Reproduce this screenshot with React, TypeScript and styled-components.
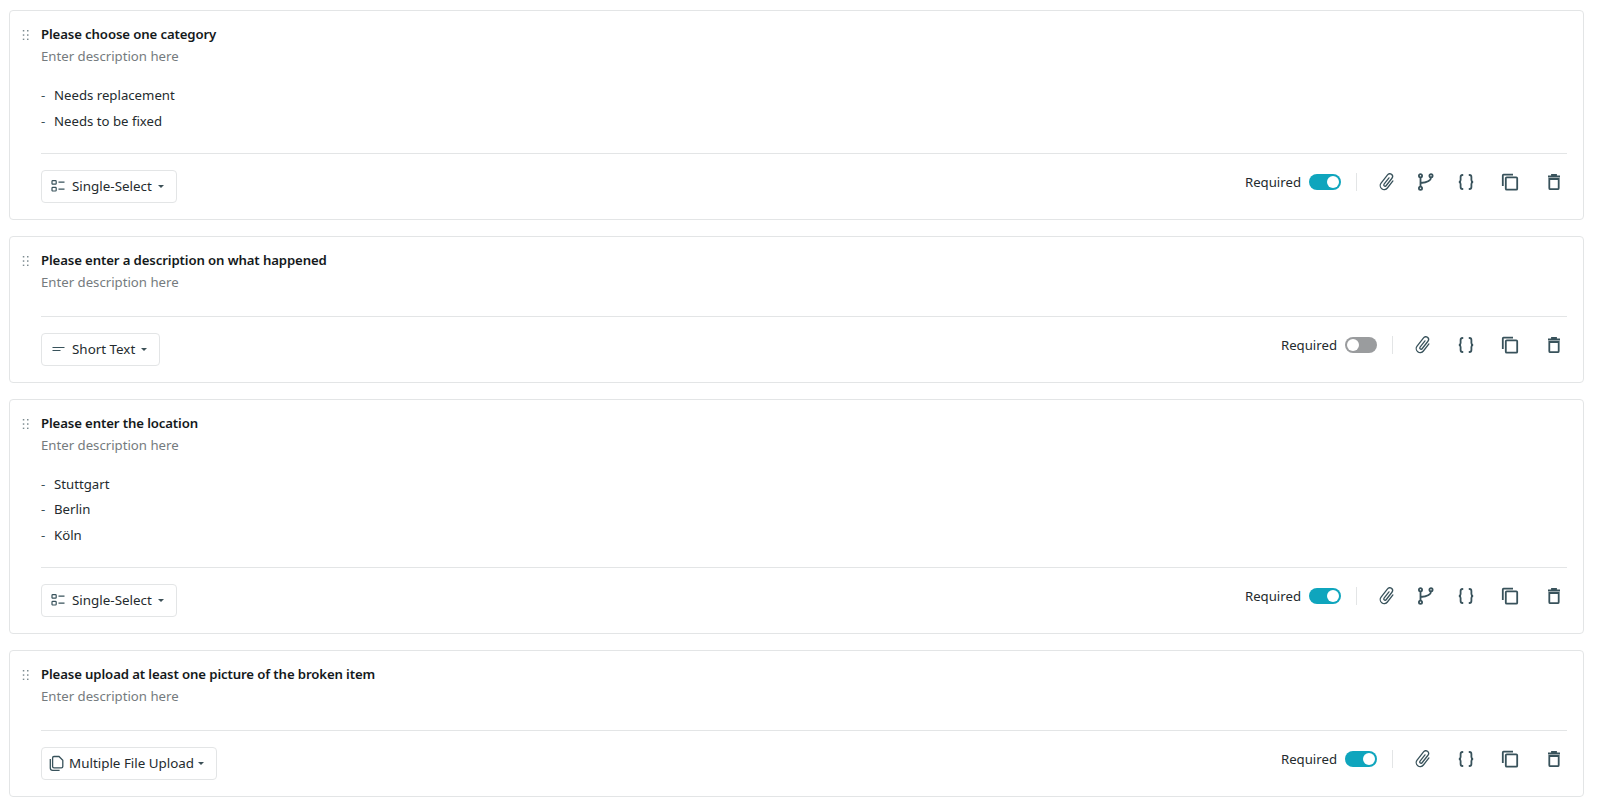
import React from 'react'
import styled, { createGlobalStyle } from 'styled-components'

const GlobalStyle = createGlobalStyle`
  html, body {
    margin: 0;
    padding: 0;
    background: #fff;
    font-family: 'Noto Sans', 'Liberation Sans', sans-serif;
  }
`

const Page = styled.div`
  display: flex;
  flex-direction: column;
  gap: 16px;
  padding: 10px 16px 0 9px;
`

const Card = styled.section`
  display: flex;
  gap: 6px;
  padding: 13px 16px 16px 12px;
  border: 1px solid #e3e5e6;
  border-radius: 4px;
  background: #fff;
`

const Handle = styled.svg`
  flex: none;
  width: 7px;
  height: 11px;
  margin-top: 5px;
  color: #7d8b90;
`

const Body = styled.div`
  flex: 1;
  min-width: 0;
  margin-left: 6px;
`

const Title = styled.h3`
  margin: 0;
  font-size: 13.2px;
  letter-spacing: -0.12px;
  line-height: 20px;
  font-weight: 600;
  color: #14191b;
`

const Description = styled.p`
  margin: 2px 0 0;
  font-size: 13.2px;
  line-height: 20px;
  color: #757b7e;
`

const Options = styled.ul`
  list-style: none;
  margin: 19px 0 0;
  padding: 0;
`

const Option = styled.li`
  display: flex;
  font-size: 13.2px;
  line-height: 20px;
  color: #242b2e;
  margin-bottom: 5.5px;

  &::before {
    content: '-';
    width: 13px;
    color: #3c5057;
  }
`

const Footer = styled.div<{ $gap: number }>`
  display: flex;
  justify-content: space-between;
  align-items: flex-start;
  margin-top: ${(p) => p.$gap}px;
  padding-top: 16px;
  border-top: 1px solid #e3e5e6;
`

const TypeButton = styled.button<{ $left: number; $gap: number }>`
  display: flex;
  align-items: center;
  height: 33px;
  padding: 0 12px 0 ${(p) => p.$left}px;
  gap: ${(p) => p.$gap}px;
  border: 1px solid #e3e5e6;
  border-radius: 4px;
  background: #fff;
  font: inherit;
  font-size: 13.4px;
  color: #242b2e;
`

const Caret = styled.span`
  width: 0;
  height: 0;
  border-left: 3px solid transparent;
  border-right: 3px solid transparent;
  border-top: 3px solid #3c5057;
`

const Actions = styled.div`
  display: flex;
  align-items: center;
  height: 24px;
`

const RequiredLabel = styled.span`
  font-size: 13.2px;
  color: #242b2e;
  margin-right: 8px;
`

const Toggle = styled.span<{ $on: boolean }>`
  display: flex;
  align-items: center;
  justify-content: ${(p) => (p.$on ? 'flex-end' : 'flex-start')};
  box-sizing: border-box;
  width: 32px;
  height: 16px;
  padding: 0 2px;
  border-radius: 8px;
  background: ${(p) => (p.$on ? '#0fa5bd' : '#9a9c9e')};

  &::after {
    content: '';
    width: 12px;
    height: 12px;
    border-radius: 50%;
    background: #fff;
  }
`

const Separator = styled.span`
  width: 1px;
  height: 18px;
  margin: 0 20px 0 15px;
  background: #e3e5e6;
`

const IconRow = styled.div`
  display: flex;
  align-items: center;
  margin-right: 3px;
`

const IconButton = styled.span<{ $offset?: number }>`
  display: flex;
  width: 20px;
  margin-left: ${(p) => p.$offset ?? 0}px;
  color: #38525b;

  svg {
    display: block;
  }
`

const ClipIcon = () => (
  <svg width="20" height="20" viewBox="0 0 20 20" fill="none" stroke="currentColor" strokeWidth="1.3" strokeLinecap="round">
    <g transform="rotate(38 10 10)">
      <path d="M14 5.500v9a4 4 0 0 1-8 0V4a2.800 2.800 0 0 1 5.600 0v9.500a1.300 1.300 0 0 1-2.600 0V5.500" />
    </g>
  </svg>
)

const BranchIcon = () => (
  <svg width="20" height="20" viewBox="0 0 20 20" fill="none" stroke="currentColor" strokeWidth="1.8">
    <circle cx="4.500" cy="3.800" r="1.600" />
    <circle cx="4.500" cy="16.200" r="1.600" />
    <circle cx="15" cy="3.800" r="1.600" />
    <path d="M4.500 5.400v9.200M15 5.400c0 3.600-5 5-10.500 5.600" />
  </svg>
)

const BracesIcon = () => (
  <svg width="20" height="20" viewBox="0 0 20 20" fill="none" stroke="currentColor" strokeWidth="1.800" strokeLinecap="round">
    <path d="M6.500 3C5 3 4.600 3.800 4.600 5v3c0 1-.5 1.800-1.600 2 1.100.2 1.600 1 1.600 2v3c0 1.200.4 2 1.900 2" />
    <path d="M13.500 3c1.500 0 1.900.8 1.900 2v3c0 1 .5 1.800 1.600 2-1.100.2-1.600 1-1.600 2v3c0 1.200-.4 2-1.900 2" />
  </svg>
)

const CopyIcon = () => (
  <svg width="20" height="20" viewBox="0 0 20 20" fill="none" stroke="currentColor" strokeWidth="1.800">
    <rect x="5.800" y="5.300" width="11.400" height="12.400" rx="1" />
    <path d="M2.800 14V3.400c0-.4.300-.7.700-.7H13" />
  </svg>
)

const TrashIcon = () => (
  <svg width="20" height="20" viewBox="0 0 20 20" fill="none" stroke="currentColor" strokeWidth="1.800">
    <path d="M4 4.500h12M8 4.300V2.900h4v1.400" />
    <path d="M5.300 7h9.400v9.200c0 .6-.4 1-1 1H6.300c-.6 0-1-.4-1-1z" />
  </svg>
)

const SelectIcon = () => (
  <svg width="15" height="14" viewBox="0 0 15 14" fill="none" stroke="#38525b" strokeWidth="1.200">
    <rect x="1" y="1.600" width="4.200" height="3.600" rx=".8" />
    <rect x="1" y="8.400" width="4.200" height="3.600" rx=".8" />
    <path d="M7.500 3.200h6M7.500 10.200h6" />
  </svg>
)

const ShortTextIcon = () => (
  <svg width="15" height="14" viewBox="0 0 15 14" fill="none" stroke="#38525b" strokeWidth="1.200">
    <path d="M1.500 5.500h12M1.500 8.500h8" />
  </svg>
)

const FilesIcon = () => (
  <svg width="16" height="18" viewBox="0 0 16 18" fill="none" stroke="#38525b" strokeWidth="1.300">
    <path d="M5 2.500h5l3.800 3.800v6.200c0 .8-.6 1.400-1.400 1.400H5c-.8 0-1.400-.6-1.400-1.400V3.900c0-.8.600-1.400 1.400-1.400z" />
    <path d="M1.300 5v9c0 1.300 1 2.300 2.300 2.300h7" />
  </svg>
)

const DragDots = () => (
  <Handle viewBox="0 0 7 11" fill="currentColor">
    {[0.8, 5].map((x) => [1, 5.3, 9.6].map((y) => <rect key={`${x}-${y}`} x={x} y={y} width="1.500" height="1.500" />))}
  </Handle>
)

type Question = {
  title: string
  options: string[]
  type: string
  icon: React.ReactNode
  left: number
  iconGap: number
  required: boolean
  branch: boolean
}

const questions: Question[] = [
  { title: 'Please choose one category', options: ['Needs replacement', 'Needs to be fixed'], type: 'Single-Select', icon: <SelectIcon />, left: 9, iconGap: 6, required: true, branch: true },
  { title: 'Please enter a description on what happened', options: [], type: 'Short Text', icon: <ShortTextIcon />, left: 9, iconGap: 6, required: false, branch: false },
  { title: 'Please enter the location', options: ['Stuttgart', 'Berlin', 'Köln'], type: 'Single-Select', icon: <SelectIcon />, left: 9, iconGap: 6, required: true, branch: true },
  { title: 'Please upload at least one picture of the broken item', options: [], type: 'Multiple File Upload', icon: <FilesIcon />, left: 7, iconGap: 4, required: true, branch: false },
]

export default function App() {
  return (
    <>
      <GlobalStyle />
      <Page>
        {questions.map((q) => (
          <Card key={q.title}>
            <DragDots />
            <Body>
              <Title>{q.title}</Title>
              <Description>Enter description here</Description>
              {q.options.length > 0 && (
                <Options>
                  {q.options.map((o) => (
                    <Option key={o}>{o}</Option>
                  ))}
                </Options>
              )}
              <Footer $gap={q.options.length > 0 ? 22 : 24}>
                <TypeButton $left={q.left} $gap={q.iconGap}>
                  {q.icon}
                  {q.type}
                  <Caret />
                </TypeButton>
                <Actions>
                  <RequiredLabel>Required</RequiredLabel>
                  <Toggle $on={q.required} />
                  <Separator />
                  <IconRow>
                    <IconButton><ClipIcon /></IconButton>
                    {q.branch && <IconButton $offset={19}><BranchIcon /></IconButton>}
                    <IconButton $offset={q.branch ? 20 : 23}><BracesIcon /></IconButton>
                    <IconButton $offset={24}><CopyIcon /></IconButton>
                    <IconButton $offset={24}><TrashIcon /></IconButton>
                  </IconRow>
                </Actions>
              </Footer>
            </Body>
          </Card>
        ))}
      </Page>
    </>
  )
}
